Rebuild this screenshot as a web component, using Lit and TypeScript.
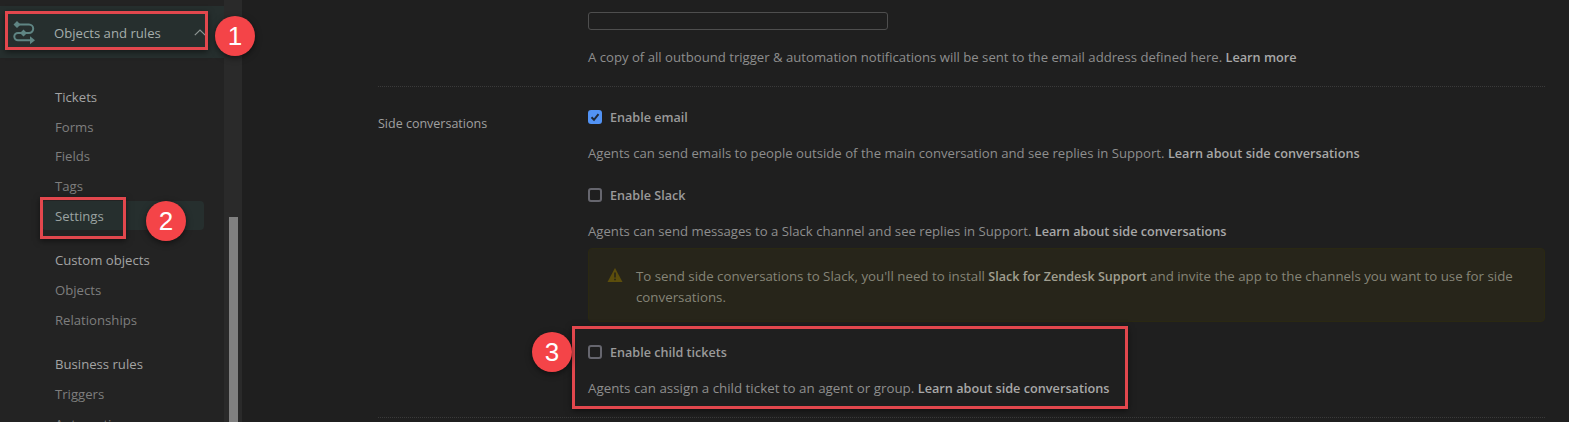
import { LitElement, html, css } from "lit";
import { customElement } from "lit/decorators.js";

const groups = [
  [["Tickets", 1], ["Forms", 0], ["Fields", 0], ["Tags", 0], ["Settings", 2]],
  [["Custom objects", 1], ["Objects", 0], ["Relationships", 0]],
  [["Business rules", 1], ["Triggers", 0], ["Automations", 0]],
] as [string, number][][];

@customElement("app-root")
export class AppRoot extends LitElement {
  static styles = css`
    :host { display: flex; position: relative; width: 1569px; height: 422px; overflow: hidden; background: #1f1f1f; font-family: "Open Sans", "Noto Sans", sans-serif; font-size: 13.15px; color: #8e8e8e; }
    * { box-sizing: border-box; }
    .side { width: 224px; flex: none; background: #232323; padding-top: 6px; }
    .head { height: 52px; background: #262f2e; display: flex; align-items: center; padding-left: 13px; color: #a5aeac; }
    .head svg.logo { width: 23px; height: 25px; flex: none; }
    .head span { margin: 1px 0 0 18px; flex: 1; }
    .head svg.chev { width: 12px; height: 7px; margin-right: 18px; }
    .groups { padding: 24px 20px 0 42px; display: flex; flex-direction: column; gap: 15px; }
    .item { height: 29.7px; display: flex; align-items: center; padding-left: 13px; color: #7e7e7e; border-radius: 4px; }
    .item.h { color: #a3a3a3; }
    .item.on { background: #262f2e; color: #9aa3a1; }
    .track { width: 18px; flex: none; background: #2a2a2a; display: flex; flex-direction: column; align-items: center; justify-content: flex-end; }
    .thumb { width: 9px; height: 205px; background: #808080; }
    .main { flex: 1; padding: 12px 24px 0 136px; }
    .sec { display: flex; border-bottom: 1px dotted #3a3a3a; }
    .sec.a { height: 75px; }
    .sec.b { height: 331px; padding-top: 18px; }
    .lbl { width: 210px; flex: none; color: #a0a0a0; padding-top: 10px; font-size: 12.5px; }
    .col { flex: 1; }
    .input { width: 300px; height: 18px; border: 1px solid #4e4e4e; border-radius: 3px; }
    .help { line-height: 18px; }
    .help.wide { font-size: 13.35px; }
    .a .help { margin-top: 18px; }
    b { font-weight: 600; color: #a8a8a8; font-size: 12.7px; }
    .chk { display: flex; align-items: center; gap: 8px; height: 24px; font-weight: 600; color: #9a9a9a; font-size: 12.6px; }
    .box { width: 14px; height: 14px; border: 2px solid #66666e; border-radius: 3px; flex: none; }
    .box.on { background: #5293f5; border: 0; display: flex; align-items: center; justify-content: center; }
    .box svg { width: 10px; height: 10px; }
    .gap { margin-top: 15px; }
    .gap2 { margin-top: 21px; }
    .warn { margin-top: 8px; height: 74px; background: #27251a; border: 1px solid #2a2812; border-radius: 4px; display: flex; padding: 17px 24px 0 18px; gap: 13px; color: #858477; font-size: 13.3px; line-height: 20px; }
    .warn svg { width: 16px; height: 16px; flex: none; margin-top: 1px; }
    .warn b { color: #a09f90; font-size: 12.6px; }
    .after { margin-top: 18px; }
    .mark { position: absolute; border: 3px solid #e2474d; box-shadow: 0 2px 6px rgba(0,0,0,.5); }
    .num { position: absolute; width: 40px; height: 40px; border-radius: 50%; background: #f44448; color: #fff; font: 26px "Liberation Sans", sans-serif; display: flex; align-items: center; justify-content: center; box-shadow: 0 2px 6px rgba(0,0,0,.5); }
    .m1 { left: 5px; top: 11px; width: 203px; height: 39px; }
    .m2 { left: 40px; top: 197px; width: 86px; height: 42px; }
    .m3 { left: 572px; top: 326px; width: 556px; height: 83px; }
    .n1 { left: 215px; top: 16px; }
    .n2 { left: 146px; top: 201px; }
    .n3 { left: 532px; top: 332px; }
  `;

  render() {
    return html`
      <aside class="side">
        <div class="head">
          <svg class="logo" viewBox="0 0 23 25" fill="none" stroke="#5f8583" stroke-width="2">
            <path d="M4 4.500h12a4.200 4.200 0 0 1 0 8.400H5a3.700 3.700 0 0 0 0 7.400h13" />
            <path d="M4 1l3.500 3.500L4 8 .5 4.500zM10.500 9.400l3.500 3.500-3.500 3.500L7 12.900z" fill="#5f8583" stroke="none" />
            <path d="M17 16.300l5 4-5 4z" fill="#5f8583" stroke="none" />
          </svg>
          <span>Objects and rules</span>
          <svg class="chev" viewBox="0 0 12 7" fill="none" stroke="#8d9593" stroke-width="1.200"><path d="M.8 6.200L6 1l5.200 5.200" /></svg>
        </div>
        <div class="groups">
          ${groups.map((g) => html`<div>
            ${g.map(([t, k]) => html`<div class="item ${k === 1 ? "h" : k === 2 ? "on" : ""}">${t}</div>`)}
          </div>`)}
        </div>
      </aside>
      <div class="track"><div class="thumb"></div></div>
      <main class="main">
        <section class="sec a">
          <div class="lbl"></div>
          <div class="col">
            <div class="input"></div>
            <div class="help">A copy of all outbound trigger &amp; automation notifications will be sent to the email address defined here. <b>Learn more</b></div>
          </div>
        </section>
        <section class="sec b">
          <div class="lbl">Side conversations</div>
          <div class="col">
            <div class="chk">
              <span class="box on"><svg viewBox="0 0 10 10" fill="none" stroke="#1f2a3a" stroke-width="2"><path d="M1.500 5.200L4 7.800 8.500 2.200" /></svg></span>Enable email
            </div>
            <div class="help gap">Agents can send emails to people outside of the main conversation and see replies in Support. <b>Learn about side conversations</b></div>
            <div class="chk gap2"><span class="box"></span>Enable Slack</div>
            <div class="help gap">Agents can send messages to a Slack channel and see replies in Support. <b>Learn about side conversations</b></div>
            <div class="warn">
              <svg viewBox="0 0 16 16"><path d="M8 1L15.500 15H.5z" fill="#5c4e0c" /><path d="M8 5.500v5M8 11.800v1.500" stroke="#27251a" stroke-width="1.600" /></svg>
              <div>To send side conversations to Slack, you'll need to install <b>Slack for Zendesk Support</b> and invite the app to the channels you want to use for side conversations.</div>
            </div>
            <div class="chk after"><span class="box"></span>Enable child tickets</div>
            <div class="help gap wide">Agents can assign a child ticket to an agent or group. <b>Learn about side conversations</b></div>
          </div>
        </section>
      </main>
      <div class="mark m1"></div><div class="mark m2"></div><div class="mark m3"></div>
      <div class="num n1">1</div><div class="num n2">2</div><div class="num n3">3</div>
    `;
  }
}
